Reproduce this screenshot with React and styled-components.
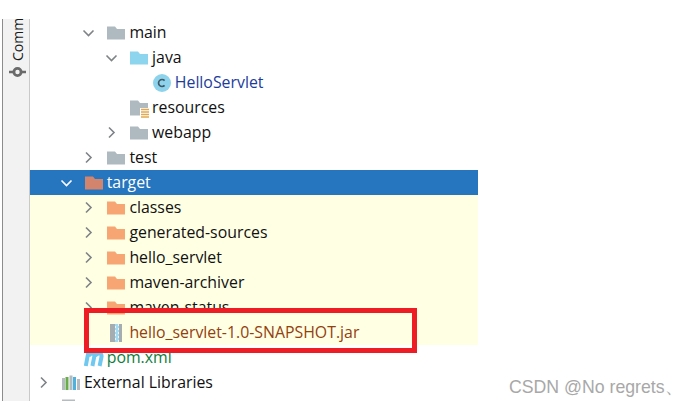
import React from "react";
import styled, { createGlobalStyle } from "styled-components";

const Global = createGlobalStyle`
  html, body { margin: 0; padding: 0; background: #fff; }
  body { width: 688px; height: 407px; overflow: hidden; font-family: "Open Sans", "Noto Sans", sans-serif; }
`;

const Page = styled.div`
  position: relative;
  width: 688px;
  height: 407px;
  overflow: hidden;
  padding-top: 19px;
  box-sizing: border-box;
`;
const Frame = styled.div`
  display: flex;
  height: 382px;
  margin-left: 2px;
  overflow: hidden;
`;
const Rail = styled.aside`
  width: 28px;
  flex: none;
  box-sizing: border-box;
  background: #f2f2f2;
  border-left: 1px solid #8c8c8c;
  border-right: 1px solid #c9c9c9;
  display: flex;
  flex-direction: column;
  align-items: center;
  gap: 5px;
  padding-left: 3px;
`;
const RailLabel = styled.span`
  writing-mode: vertical-rl;
  transform: rotate(180deg);
  font: 14px/14px "Open Sans", sans-serif;
  color: #1a1a1a;
  height: 42px;
  text-align: left;
`;
const Tree = styled.div`
  width: 448px;
  flex: none;
  padding-top: 1px;
`;
const Row = styled.div`
  display: flex;
  align-items: center;
  height: 25px;
  box-sizing: border-box;
  padding-left: ${(p) => 6 + p.$level * 22.7}px;
  background: ${(p) => (p.$selected ? "#2675bf" : p.$excluded ? "#ffffe4" : "transparent")};
  color: ${(p) => (p.$selected ? "#fff" : p.$color || "#111")};
  font-size: 15.85px;
  white-space: nowrap;
`;
const ArrowSlot = styled.span`
  width: 17px;
  flex: none;
  display: flex;
  justify-content: flex-start;
`;
const IconSlot = styled.span`
  width: 18px;
  height: 18px;
  flex: none;
  margin: 0 4px 0 9px;
  display: block;
`;
const Label = styled.span`
  margin-top: -2px;
`;
const Highlight = styled.div`
  position: absolute;
  left: 84px;
  top: 308px;
  width: 333px;
  height: 45px;
  box-sizing: border-box;
  border: 5px solid #ee1c25;
`;
const Watermark = styled.div`
  position: absolute;
  left: 509px;
  top: 377px;
  font: 17.7px/20px "Liberation Sans", sans-serif;
  color: #a8a8a8;
  white-space: nowrap;
`;

const Chevron = ({ open, color = "#7f8386" }) => (
  <svg width="16" height="16" viewBox="0 0 16 16" fill="none" stroke={color} strokeWidth="1.6">
    {open ? <path d="M2.5 5.5 L7.5 10.5 L12.5 5.5" /> : <path d="M5 2.5 L10 7.5 L5 12.5" />}
  </svg>
);

const Folder = ({ color }) => (
  <svg width="18" height="18" viewBox="0 0 18 18">
    <path d="M0 2.5 H8 L10 5 H18 V15.5 H0 Z" fill={color} />
  </svg>
);

const Resources = () => (
  <svg width="21" height="20" viewBox="0 0 21 20">
    <path d="M0 1.5 H8 L10 4 H18 V15 H12 V16.5 H0 Z" fill="#aeb9c0" />
    <rect x="10" y="9" width="10" height="10" fill="#fff" />
    <path d="M11 10.5 H19 M11 13 H19 M11 15.5 H19 M11 18 H19" stroke="#e2a94e" strokeWidth="1.6" />
  </svg>
);

const ClassIcon = () => (
  <svg width="18" height="18" viewBox="0 0 18 18">
    <circle cx="9" cy="9" r="9" fill="#8ed3ec" />
    <path d="M11.6 6.6 A3.5 3.5 0 1 0 11.6 11.4" fill="none" stroke="#3f5866" strokeWidth="1.7" />
  </svg>
);

const JarIcon = () => (
  <svg width="18" height="18" viewBox="0 0 18 18">
    <rect x="3" y="0" width="5" height="18" fill="#a6adb1" />
    <rect x="12" y="0" width="3" height="18" fill="#a6adb1" />
    <rect x="8" y="0" width="4" height="18" fill="#e8f6fb" />
    <path d="M8 1 H11 M9 3 H12 M8 5 H11 M9 7 H12 M8 9 H11 M9 11 H12 M8 13 H11 M9 15 H12 M8 17 H11" stroke="#5cc0e3" strokeWidth="1.2" />
  </svg>
);

const MavenIcon = () => (
  <svg width="20" height="18" viewBox="0 0 20 18" fill="none" stroke="#6fc8f0" strokeWidth="4" style={{ marginLeft: -1 }}>
    <path d="M1.8 17 L4.2 4 M4.5 7 C6.8 3.2 11 3.6 10.2 8 L8.4 17 M11 7 C13.4 3.2 18.2 3.6 17.5 8 L15.6 17" />
  </svg>
);

const LibIcon = () => (
  <svg width="18" height="18" viewBox="0 0 18 18">
    <rect x="0" y="4" width="3" height="12" fill="#b4bcc1" />
    <rect x="3.5" y="3" width="3" height="13" fill="#69ad4b" />
    <rect x="7.5" y="1.5" width="3" height="14.5" fill="#b4bcc1" />
    <rect x="11" y="3" width="3" height="13" fill="#4fb1de" />
    <rect x="15" y="5" width="3" height="11" fill="#b4bcc1" />
  </svg>
);

const ScratchIcon = () => (
  <svg width="18" height="18" viewBox="0 0 18 18">
    <rect x="0" y="0.5" width="13" height="17" fill="#b4bcc1" />
  </svg>
);

const GRAY = "#aeb9c0";
const ORANGE = "#f7a673";

const rows = [
  { level: 2, open: true, icon: <Folder color={GRAY} />, label: "main" },
  { level: 3, open: true, icon: <Folder color="#8dd4ee" />, label: "java" },
  { level: 4, icon: <ClassIcon />, label: "HelloServlet", color: "#1b3c9c" },
  { level: 3, icon: <Resources />, label: "resources" },
  { level: 3, open: false, icon: <Folder color={GRAY} />, label: "webapp" },
  { level: 2, open: false, icon: <Folder color={GRAY} />, label: "test" },
  { level: 1, open: true, selected: true, icon: <Folder color="#d3846c" />, label: "target" },
  { level: 2, open: false, excluded: true, icon: <Folder color={ORANGE} />, label: "classes" },
  { level: 2, open: false, excluded: true, icon: <Folder color={ORANGE} />, label: "generated-sources" },
  { level: 2, open: false, excluded: true, icon: <Folder color={ORANGE} />, label: "hello_servlet" },
  { level: 2, open: false, excluded: true, icon: <Folder color={ORANGE} />, label: "maven-archiver" },
  { level: 2, open: false, excluded: true, icon: <Folder color={ORANGE} />, label: "maven-status" },
  { level: 2, excluded: true, icon: <JarIcon />, label: "hello_servlet-1.0-SNAPSHOT.jar", color: "#93400f" },
  { level: 1, icon: <MavenIcon />, label: "pom.xml", color: "#0f7d3c" },
  { level: 0, open: false, icon: <LibIcon />, label: "External Libraries" },
  { level: 0, icon: <ScratchIcon />, label: "" },
];

export default function App() {
  return (
    <Page>
      <Global />
      <Frame>
        <Rail>
          <RailLabel>Comm</RailLabel>
          <svg width="17" height="12" viewBox="0 0 17 12" fill="none" stroke="#6a6a6a">
            <circle cx="8.5" cy="6" r="3.6" strokeWidth="2.8" />
            <path d="M0 6 H4 M13 6 H17" strokeWidth="2.4" />
          </svg>
        </Rail>
        <Tree>
          {rows.map((r) => (
            <Row key={r.label} $level={r.level} $selected={r.selected} $excluded={r.excluded} $color={r.color}>
              <ArrowSlot>
                {r.open !== undefined && <Chevron open={r.open} color={r.selected ? "#fff" : undefined} />}
              </ArrowSlot>
              <IconSlot>{r.icon}</IconSlot>
              {r.label && <Label>{r.label}</Label>}
            </Row>
          ))}
        </Tree>
      </Frame>
      <Highlight />
      <Watermark>CSDN @No regrets、</Watermark>
    </Page>
  );
}
